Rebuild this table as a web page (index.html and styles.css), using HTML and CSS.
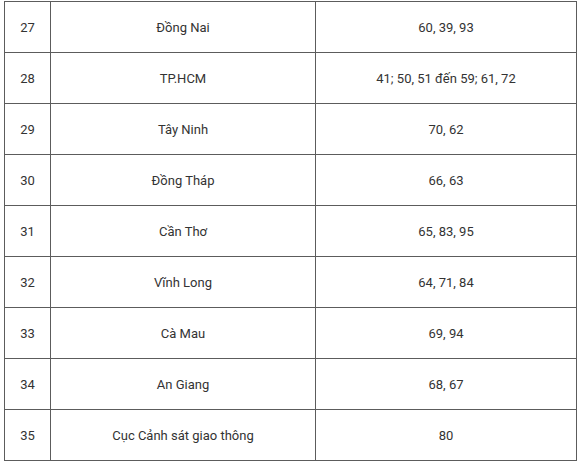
FILE: index.html
```html
<!DOCTYPE html>
<html lang="vi">
<head>
<meta charset="utf-8">
<link rel="stylesheet" href="styles.css">
</head>
<body>
<table class="plates">
  <colgroup>
    <col class="c-no">
    <col class="c-name">
    <col class="c-code">
  </colgroup>
  <tbody>
    <tr><td>27</td><td>Đồng Nai</td><td>60, 39, 93</td></tr>
    <tr><td>28</td><td>TP.HCM</td><td>41; 50, 51 đến 59; 61, 72</td></tr>
    <tr><td>29</td><td>Tây Ninh</td><td>70, 62</td></tr>
    <tr><td>30</td><td>Đồng Tháp</td><td>66, 63</td></tr>
    <tr><td>31</td><td>Cần Thơ</td><td>65, 83, 95</td></tr>
    <tr><td>32</td><td>Vĩnh Long</td><td>64, 71, 84</td></tr>
    <tr><td>33</td><td>Cà Mau</td><td>69, 94</td></tr>
    <tr><td>34</td><td>An Giang</td><td>68, 67</td></tr>
    <tr><td>35</td><td>Cục Cảnh sát giao thông</td><td>80</td></tr>
  </tbody>
</table>
</body>
</html>
```
FILE: styles.css
```css
html, body {
  margin: 0;
  padding: 0;
  background: #ffffff;
}
body {
  padding: 1px 0 0 4px;
  font-family: Roboto, "Liberation Sans", sans-serif;
  font-size: 13px;
  color: #333333;
}
.plates {
  border-collapse: collapse;
  table-layout: fixed;
  width: 572px;
}
.c-no { width: 46px; }
.c-name { width: 265px; }
.c-code { width: 261px; }
.plates td {
  border: 1px solid #5c5c5c;
  height: 50px;
  padding: 0;
  text-align: center;
  vertical-align: middle;
  box-sizing: border-box;
  height: 51px;
}
```
